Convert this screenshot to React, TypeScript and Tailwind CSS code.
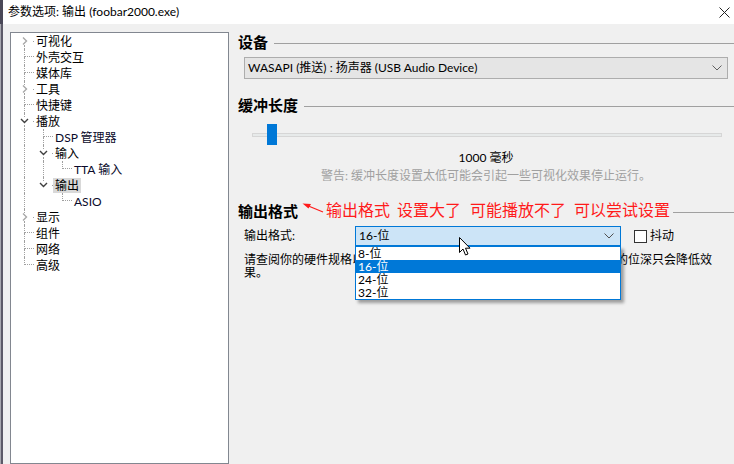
import React from "react";

type TreeRow = {
  label: string;
  level: number;
  chevron?: "closed" | "open";
  cells: boolean[]; // ancestor continuation lines
  top: boolean;
  bottom: boolean;
  selected?: boolean;
};

const rows: TreeRow[] = [
  { label: "可视化", level: 0, chevron: "closed", cells: [], top: false, bottom: true },
  { label: "外壳交互", level: 0, cells: [], top: true, bottom: true },
  { label: "媒体库", level: 0, cells: [], top: true, bottom: true },
  { label: "工具", level: 0, chevron: "closed", cells: [], top: true, bottom: true },
  { label: "快捷键", level: 0, cells: [], top: true, bottom: true },
  { label: "播放", level: 0, chevron: "open", cells: [], top: true, bottom: true },
  { label: "DSP 管理器", level: 1, cells: [true], top: true, bottom: true },
  { label: "输入", level: 1, chevron: "open", cells: [true], top: true, bottom: true },
  { label: "TTA 输入", level: 2, cells: [true, true], top: true, bottom: false },
  { label: "输出", level: 1, chevron: "open", cells: [true], top: true, bottom: false, selected: true },
  { label: "ASIO", level: 2, cells: [true, false], top: true, bottom: false },
  { label: "显示", level: 0, chevron: "closed", cells: [], top: true, bottom: true },
  { label: "组件", level: 0, cells: [], top: true, bottom: true },
  { label: "网络", level: 0, cells: [], top: true, bottom: true },
  { label: "高级", level: 0, cells: [], top: true, bottom: false },
];

const dot = "border-dotted border-[#a0a0a0]";

function Chevron({ open }: { open: boolean }) {
  return open ? (
    <svg width="9" height="8" viewBox="0 0 9 8">
      <path d="M1 2 L4.5 5.5 L8 2" fill="none" stroke="#404040" strokeWidth="1.4" />
    </svg>
  ) : (
    <svg width="9" height="8" viewBox="0 0 9 8">
      <path d="M3 0.5 L6.5 4 L3 7.5" fill="none" stroke="#a8a8a8" strokeWidth="1.4" />
    </svg>
  );
}

function OwnCell({ row }: { row: TreeRow }) {
  if (row.chevron) {
    return (
      <div className="flex h-[16px] w-[19px] flex-col">
        <div className={`ml-[9px] h-[4px] ${row.top ? `border-l ${dot}` : ""}`} />
        <div className="flex h-[8px] items-center">
          <div className="ml-[5px] bg-white">
            <Chevron open={row.chevron === "open"} />
          </div>
          <div className="ml-[4px] h-px w-px bg-[#a0a0a0]" />
        </div>
        <div className={`ml-[9px] h-[4px] ${row.bottom ? `border-l ${dot}` : ""}`} />
      </div>
    );
  }
  return (
    <div className="flex h-[16px] w-[19px]">
      <div className="w-[9px]" />
      <div className="flex w-[10px] flex-col">
        <div className={`h-[8px] border-b ${dot} ${row.top ? "border-l" : ""}`} />
        <div className={`h-[8px] ${row.bottom ? `border-l ${dot}` : ""}`} />
      </div>
    </div>
  );
}

function Tree() {
  return (
    <div className="h-full w-[219px] border border-[#828790] bg-white pl-[4px] text-[12px] text-black">
      {rows.map((r) => (
        <div key={r.label} className="flex h-[16px] items-center">
          {r.cells.map((c, i) => (
            <div key={i} className="flex h-[16px] w-[19px]">
              <div className={`ml-[9px] h-full ${c ? `border-l ${dot}` : ""}`} />
            </div>
          ))}
          <OwnCell row={r} />
          <span
            className={`px-[2px] leading-[15px] ${r.selected ? "bg-[#d9d9d9]" : ""} ${
              r.level > 0 && !r.chevron ? "text-[#0a0a2a]" : ""
            }`}
          >
            {r.label}
          </span>
        </div>
      ))}
    </div>
  );
}

function Heading({ title, children }: { title: string; children?: React.ReactNode }) {
  return (
    <div className="relative flex h-[18px] items-center">
      <span className="text-[15px] font-bold leading-[18px] text-black">{title}</span>
      <div className="ml-[6px] mt-[2px] h-px flex-1 bg-[#a0a0a0]" />
      {children}
    </div>
  );
}

function SmallChevron({ color }: { color: string }) {
  return (
    <svg width="10" height="6" viewBox="0 0 10 6">
      <path d="M0.5 0.5 L5 5 L9.5 0.5" fill="none" stroke={color} strokeWidth="1" />
    </svg>
  );
}

export default function App() {
  return (
    <div className="flex h-[464px] w-[734px] overflow-hidden bg-[#f0f0f0] font-['Lato','Noto_Sans_CJK_SC',sans-serif] text-[12px] text-black">
      <div className="flex w-[3px] shrink-0 flex-col">
        <div className="h-[24px] shrink-0 bg-[#4a4858]" />
        <div className="flex flex-1">
          <div className="w-[1px] bg-[#a8a8b0]" />
          <div className="w-[2px] bg-[#5c5a68]" />
        </div>
      </div>
      <div className="flex min-h-0 flex-1 flex-col">
        {/* title bar */}
        <div className="flex h-[24px] shrink-0 items-center justify-between bg-white pl-[5px] pr-[3px]">
          <span className="text-[12px] leading-[16px]">参数选项: 输出 (foobar2000.exe)</span>
          <svg width="11" height="11" viewBox="0 0 11 11" className="mr-[1px]">
            <path d="M0.5 0.5 L10.5 10.5 M10.5 0.5 L0.5 10.5" stroke="#222" strokeWidth="1" />
          </svg>
        </div>

        <div className="flex min-h-0 flex-1">
          <div className="ml-[7px] mt-[8px] h-[432px] shrink-0">
            <Tree />
          </div>

          {/* right page */}
          <div className="flex flex-1 flex-col pl-[9px]">
            <div className="mt-[9px]">
              <Heading title="设备" />
            </div>
            <div className="ml-[6px] mr-[6px] mt-[6px] flex h-[22px] items-center justify-between border border-[#adadad] bg-[#e5e5e5] pl-[3px] pr-[5px]">
              <span className="leading-[14px]">WASAPI (推送) : 扬声器 (USB Audio Device)</span>
              <SmallChevron color="#606060" />
            </div>

            <div className="mt-[17px]">
              <Heading title="缓冲长度" />
            </div>
            <div className="ml-[14px] mr-[12px] mt-[10px] flex h-[21px] items-center">
              <div className="relative h-[4px] flex-1 border border-[#d6d6d6] bg-[#e7eaea]">
                <div className="absolute left-[14px] top-[-10px] h-[21px] w-[10px] bg-[#0078d7]" />
              </div>
            </div>
            <div className="mt-[6px] flex h-[14px] items-center justify-center leading-[14px]">1000 毫秒</div>
            <div className="mt-[4px] flex h-[14px] items-center justify-center leading-[14px] text-[#a0a0a0]">
              警告: 缓冲长度设置太低可能会引起一些可视化效果停止运行。
            </div>

            <div className="mt-[19px]">
              <Heading title="输出格式">
                <div className="absolute left-[64px] top-[-3px] flex items-center bg-[#f0f0f0] pr-[3px] text-[16px] leading-[22px] text-[#ff1a1a]">
                  <svg width="22" height="14" viewBox="0 0 22 14" className="mr-[2px] mt-[-4px]">
                    <path d="M21 11 L4 4" stroke="#ff1a1a" strokeWidth="1.2" />
                    <path d="M0.5 2.5 L9 3 L6.5 7.5 Z" fill="#ff1a1a" />
                  </svg>
                  <span>输出格式</span>
                  <span className="ml-[7px]">设置大了</span>
                  <span className="ml-[9px]">可能播放不了</span>
                  <span className="ml-[8px]">可以尝试设置</span>
                </div>
              </Heading>
            </div>

            <div className="ml-[6px] mt-[6px] flex h-[20px] items-center">
              <span className="w-[111px] leading-[14px]">输出格式:</span>
              <div className="relative h-[20px] w-[266px]">
                <div className="flex h-full items-center justify-between border border-[#0078d7] bg-[#cce4f7] pl-[3px] pr-[6px]">
                  <span className="leading-[14px]">16-位</span>
                  <SmallChevron color="#505050" />
                </div>
                {/* open list */}
                <div className="absolute left-0 top-[20px] z-10 w-[266px] border border-[#0078d7] bg-white shadow-[3px_3px_3px_rgba(0,0,0,0.35)]">
                  <div className="h-[13px] pl-[2px] leading-[13px]">8-位</div>
                  <div className="h-[13px] bg-[#0078d7] pl-[2px] leading-[13px] text-white">16-位</div>
                  <div className="h-[13px] pl-[2px] leading-[13px]">24-位</div>
                  <div className="h-[13px] pl-[2px] leading-[13px]">32-位</div>
                </div>
                {/* mouse cursor */}
                <svg
                  width="12"
                  height="19"
                  viewBox="0 0 12 19"
                  className="absolute left-[104px] top-[11px] z-20"
                >
                  <path
                    d="M0.5 0.5 L0.5 15.5 L4 12 L6.5 18 L9 17 L6.5 11.2 L11 11.2 Z"
                    fill="white"
                    stroke="black"
                    strokeWidth="1"
                  />
                </svg>
              </div>
              <div className="ml-[13px] flex items-center">
                <div className="h-[13px] w-[13px] border border-[#333] bg-white" />
                <span className="ml-[3px] leading-[14px]">抖动</span>
              </div>
            </div>

            <p className="ml-[6px] mt-[7px] w-[472px] leading-[13px]">
              请查阅你的硬件规格以确定它所支持的输出位深度。选择高于硬件支持的位深只会降低效果。
            </p>
          </div>
        </div>
      </div>
    </div>
  );
}
